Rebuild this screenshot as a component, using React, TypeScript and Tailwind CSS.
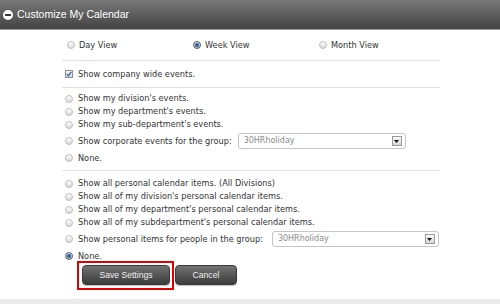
import React from "react";

const font = { fontFamily: '"DejaVu Sans", Verdana, sans-serif' };

function Radio({ checked = false }: { checked?: boolean }) {
  return (
    <span
      className={
        "inline-flex shrink-0 items-center justify-center w-[8px] h-[8px] rounded-full border " +
        (checked
          ? "border-[#5a5a5a] bg-gradient-to-b from-[#e8e8e8] to-[#b8b8b8]"
          : "border-[#bdbdbd] bg-gradient-to-b from-[#ffffff] to-[#d9d9d9]")
      }
    >
      {checked && <span className="block w-[4px] h-[4px] rounded-full bg-[#1e64b4]" />}
    </span>
  );
}

function Checkbox() {
  return (
    <span className="inline-flex shrink-0 items-center justify-center w-[8px] h-[8px] border border-[#8f8f8f] bg-gradient-to-b from-[#f4f4f4] to-[#dcdcdc]">
      <svg width="6" height="6" viewBox="0 0 6 6">
        <path d="M0.8 3.2 L2.3 4.8 L5.3 0.8" fill="none" stroke="#2456a8" strokeWidth="1.2" />
      </svg>
    </span>
  );
}

function Select({ w }: { w: string }) {
  return (
    <div
      className={
        "flex items-center justify-between h-[16px] rounded-[3px] border border-[#c4c4c4] bg-white pl-[5px] pr-[3px] " + w
      }
    >
      <span className="text-[8px] text-[#8a8a8a] leading-none" style={font}>
        30HRholiday
      </span>
      <span className="flex items-center justify-center w-[10px] h-[10px] border border-[#9a9a9a] bg-gradient-to-b from-[#fafafa] to-[#d6d6d6]">
        <svg width="5" height="3" viewBox="0 0 5 3">
          <path d="M0 0 L5 0 L2.5 3 Z" fill="#111" />
        </svg>
      </span>
    </div>
  );
}

function Row({ children, h = "h-[13px]", checked = false }: { children: React.ReactNode; h?: string; checked?: boolean }) {
  return (
    <div className={"flex items-center pl-[3px] " + h}>
      <Radio checked={checked} />
      <span className="ml-[5px] text-[8.2px] text-[#333] whitespace-nowrap leading-none" style={font}>
        {children}
      </span>
    </div>
  );
}

export default function App() {
  return (
    <div className="w-[500px] h-[304px] bg-white flex flex-col overflow-hidden">
      <div className="h-[30px] shrink-0 flex items-center bg-gradient-to-b from-[#7a7a7a] to-[#434343] border-b border-[#9a9a9a]">
        <span className="ml-[3px] w-[10px] h-[10px] rounded-full bg-white flex items-center justify-center">
          <span className="block w-[6px] h-[2px] bg-[#3d3d3d]" />
        </span>
        <span
          className="ml-[4px] text-[10.5px] text-white leading-none"
          style={{ fontFamily: '"Liberation Sans", Arial, sans-serif' }}
        >
          Customize My Calendar
        </span>
      </div>

      <div className="ml-[62px] w-[378px] flex flex-col">
        <div className="h-[30px] grid grid-cols-3 items-center">
          {[
            ["Day View", false],
            ["Week View", true],
            ["Month View", false],
          ].map(([t, c]) => (
            <div key={t as string} className="flex items-center pl-[5px]">
              <Radio checked={c as boolean} />
              <span className="ml-[4px] text-[8.2px] text-[#333] leading-none" style={font}>
                {t as string}
              </span>
            </div>
          ))}
        </div>
        <div className="h-px bg-[#e2e2e2]" />
        <div className="h-[26px] flex items-center pl-[3px]">
          <Checkbox />
          <span className="ml-[5px] text-[8.2px] text-[#333] leading-none" style={font}>
            Show company wide events.
          </span>
        </div>
        <div className="h-px bg-[#e2e2e2]" />

        <div className="pt-[4px] flex flex-col">
          <Row>Show my division's events.</Row>
          <Row>Show my department's events.</Row>
          <Row>Show my sub-department's events.</Row>
          <div className="flex items-center h-[20px]">
            <Row>Show corporate events for the group:</Row>
            <div className="ml-[6px]">
              <Select w="w-[168px]" />
            </div>
          </div>
          <Row h="h-[14px]">None.</Row>
        </div>
        <div className="mt-[5px] h-px bg-[#e2e2e2]" />

        <div className="pt-[6px] flex flex-col">
          <Row>Show all personal calendar items. (All Divisions)</Row>
          <Row>Show all of my division's personal calendar items.</Row>
          <Row>Show all of my department's personal calendar items.</Row>
          <Row>Show all of my subdepartment's personal calendar items.</Row>
          <div className="flex items-center h-[20px]">
            <Row>Show personal items for people in the group:</Row>
            <div className="ml-[9px]">
              <Select w="w-[167px]" />
            </div>
          </div>
          <Row h="h-[14px]" checked>
            None.
          </Row>
        </div>

        <div className="mt-[2px] ml-[20px] flex items-start gap-[5px]">
          <div className="relative flex">
            <button
              className="w-[88px] h-[20px] rounded-[4px] border border-[#3a3a3a] bg-gradient-to-b from-[#737373] to-[#3c3c3c] text-[8.6px] text-[#f0f0f0] shadow-[0_1px_1px_rgba(0,0,0,0.25)]"
              style={{ fontFamily: '"Liberation Sans", Arial, sans-serif' }}
            >
              Save Settings
            </button>
            <span className="absolute left-[-5px] right-[-4px] top-[-4px] bottom-[-5px] border-2 border-[#e00000] pointer-events-none" />
          </div>
          <button
            className="w-[62px] h-[20px] rounded-[4px] border border-[#3a3a3a] bg-gradient-to-b from-[#737373] to-[#3c3c3c] text-[8.6px] text-[#f0f0f0] shadow-[0_1px_1px_rgba(0,0,0,0.25)]"
            style={{ fontFamily: '"Liberation Sans", Arial, sans-serif' }}
          >
            Cancel
          </button>
        </div>
      </div>

      <div className="flex-1" />
      <div className="h-[5px] shrink-0 bg-[#ebebeb]" />
    </div>
  );
}
